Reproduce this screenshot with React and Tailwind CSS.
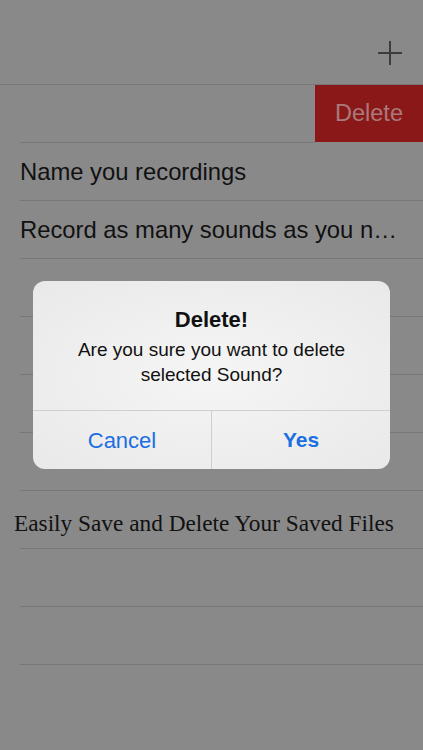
import React from "react";

const rows = [
  { text: "", del: true },
  { text: "Name you recordings" },
  { text: "Record as many sounds as you n\u2026" },
  { text: "" },
  { text: "" },
  { text: "" },
  { text: "" },
  { text: "Easily Save and Delete Your Saved Files", serif: true },
  { text: "" },
  { text: "" },
];

export default function App() {
  return (
    <div className="relative w-[423px] h-[750px] overflow-hidden bg-[#898989]" style={{ fontFamily: '"Liberation Sans", Arial, sans-serif' }}>
      <div className="h-[85px] border-b border-[#777777] flex items-center justify-end pr-[20px] pt-[22px]">
        <svg width="26" height="26" viewBox="0 0 26 26" className="block">
          <path d="M13 1V25M1 13H25" stroke="#3c3c3c" strokeWidth="2" fill="none" />
        </svg>
      </div>
      {rows.map((r, i) => (
        <div key={i} className="relative h-[58px] flex">
          <div className="flex-1 ml-[20px] border-b border-[#777777] flex items-center min-w-0">
            {r.serif ? (
              <span className="-ml-[6px] pt-[7px] text-[23.3px] text-[#111111] whitespace-nowrap" style={{ fontFamily: '"Liberation Serif", "Times New Roman", serif' }}>
                {r.text}
              </span>
            ) : (
              <span className="pt-[1px] text-[23.8px] text-[#111111] whitespace-nowrap">{r.text}</span>
            )}
          </div>
          {r.del && (
            <div className="w-[108px] h-[57px] bg-[#8b1818] flex items-center justify-center text-[23.5px] text-[#a87a7a]">
              Delete
            </div>
          )}
        </div>
      ))}

      <div className="absolute left-[33px] top-[281px] w-[357px] h-[188px] rounded-[12px] overflow-hidden flex flex-col bg-[radial-gradient(ellipse_at_center,#f5f5f5_0%,#e9e9e9_100%)]">
        <div className="flex-1 flex flex-col items-center pt-[26px] text-[#111111]">
          <div className="text-[22px] leading-[26px] font-bold">Delete!</div>
          <div className="mt-[4px] text-[19px] leading-[25px] text-center">
            Are you sure you want to delete
            <br />
            selected Sound?
          </div>
        </div>
        <div className="h-[59px] border-t border-[#cfcfcf] flex">
          <div className="w-[179px] border-r border-[#cfcfcf] flex items-center justify-center text-[22px] text-[#1b6fe3]">
            Cancel
          </div>
          <div className="flex-1 flex items-center justify-center text-[21px] font-bold text-[#1b6fe3]">
            Yes
          </div>
        </div>
      </div>
    </div>
  );
}
